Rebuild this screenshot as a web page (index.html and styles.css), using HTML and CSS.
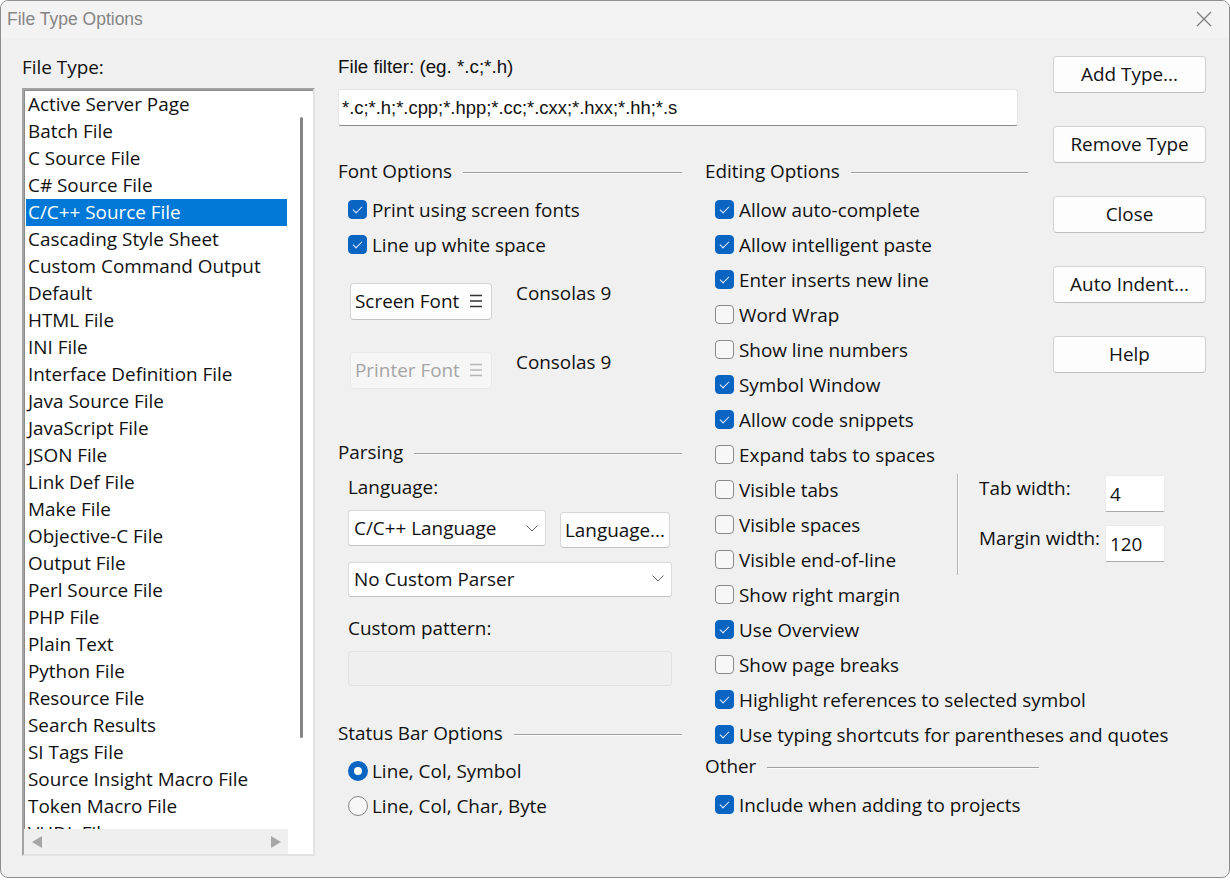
FILE: index.html
```html
<!DOCTYPE html>
<html>
<head>
<meta charset="utf-8">
<title>File Type Options</title>
<link rel="stylesheet" href="styles.css">
</head>
<body>
<div class="window">
  <div class="titlebar">
    <span class="title">File Type Options</span>
    <svg class="close" width="16" height="16" viewBox="0 0 16 16"><path d="M1 1 L15 15 M15 1 L1 15" stroke="#7a7a7a" stroke-width="1.2" fill="none"/></svg>
  </div>
  <div class="content">
    <div class="col-list">
      <div class="lbl">File Type:</div>
      <div class="listbox">
        <div class="items">
          <div class="item">Active Server Page</div>
          <div class="item">Batch File</div>
          <div class="item">C Source File</div>
          <div class="item">C# Source File</div>
          <div class="item selected">C/C++ Source File</div>
          <div class="item">Cascading Style Sheet</div>
          <div class="item">Custom Command Output</div>
          <div class="item">Default</div>
          <div class="item">HTML File</div>
          <div class="item">INI File</div>
          <div class="item">Interface Definition File</div>
          <div class="item">Java Source File</div>
          <div class="item">JavaScript File</div>
          <div class="item">JSON File</div>
          <div class="item">Link Def File</div>
          <div class="item">Make File</div>
          <div class="item">Objective-C File</div>
          <div class="item">Output File</div>
          <div class="item">Perl Source File</div>
          <div class="item">PHP File</div>
          <div class="item">Plain Text</div>
          <div class="item">Python File</div>
          <div class="item">Resource File</div>
          <div class="item">Search Results</div>
          <div class="item">SI Tags File</div>
          <div class="item">Source Insight Macro File</div>
          <div class="item">Token Macro File</div>
          <div class="item">VHDL File</div>
        </div>
        <div class="vscroll"><div class="thumb"></div></div>
        <div class="hscroll">
          <span class="arrow-left"></span>
          <span class="arrow-right"></span>
        </div>
        <div class="corner"></div>
      </div>
    </div>

    <div class="col-main">
      <div class="lbl filter-lbl">File filter: (eg. *.c;*.h)</div>
      <div class="filter-input">*.c;*.h;*.cpp;*.hpp;*.cc;*.cxx;*.hxx;*.hh;*.s</div>

      <div class="groups">
        <div class="col-left">
          <div class="group-head">Font Options</div>
          <div class="checks first">
            <div class="check"><span class="box on"></span>Print using screen fonts</div>
            <div class="check"><span class="box on"></span>Line up white space</div>
          </div>
          <div class="fontrow">
            <div class="fbtn"><span>Screen Font</span>
              <svg width="14" height="14" viewBox="0 0 14 14"><path d="M1 1.5 H13 M1 7 H13 M1 12.5 H13" stroke="#333" stroke-width="1.4"/></svg>
            </div>
            <div class="fontname">Consolas 9</div>
          </div>
          <div class="fontrow second">
            <div class="fbtn disabled"><span>Printer Font</span>
              <svg width="14" height="14" viewBox="0 0 14 14"><path d="M1 1.5 H13 M1 7 H13 M1 12.5 H13" stroke="#b5b5b5" stroke-width="1.4"/></svg>
            </div>
            <div class="fontname">Consolas 9</div>
          </div>

          <div class="group-head parsing">Parsing</div>
          <div class="sublbl lang-lbl">Language:</div>
          <div class="langrow">
            <div class="select sel-lang"><span>C/C++ Language</span>
              <svg width="12" height="7" viewBox="0 0 12 7"><path d="M0.5 0.5 L6 6 L11.5 0.5" stroke="#666" stroke-width="1" fill="none"/></svg>
            </div>
            <div class="pbtn lang-btn">Language...</div>
          </div>
          <div class="select sel-parser"><span>No Custom Parser</span>
            <svg width="12" height="7" viewBox="0 0 12 7"><path d="M0.5 0.5 L6 6 L11.5 0.5" stroke="#666" stroke-width="1" fill="none"/></svg>
          </div>
          <div class="sublbl pattern-lbl">Custom pattern:</div>
          <div class="pattern-input"></div>

          <div class="group-head status">Status Bar Options</div>
          <div class="checks radios">
            <div class="check"><span class="radio on"></span>Line, Col, Symbol</div>
            <div class="check"><span class="radio"></span>Line, Col, Char, Byte</div>
          </div>
        </div>

        <div class="col-right">
          <div class="group-head editing">Editing Options</div>
          <div class="checks first">
            <div class="check"><span class="box on"></span>Allow auto-complete</div>
            <div class="check"><span class="box on"></span>Allow intelligent paste</div>
            <div class="check"><span class="box on"></span>Enter inserts new line</div>
            <div class="check"><span class="box"></span>Word Wrap</div>
            <div class="check"><span class="box"></span>Show line numbers</div>
            <div class="check"><span class="box on"></span>Symbol Window</div>
            <div class="check"><span class="box on"></span>Allow code snippets</div>
            <div class="check"><span class="box"></span>Expand tabs to spaces</div>
            <div class="tabgroup">
              <div class="tabchecks">
                <div class="check"><span class="box"></span>Visible tabs</div>
                <div class="check"><span class="box"></span>Visible spaces</div>
                <div class="check"><span class="box"></span>Visible end-of-line</div>
                <div class="check"><span class="box"></span>Show right margin</div>
              </div>
              <div class="vsep"></div>
              <div class="tabgrid">
                <div class="tlbl">Tab width:</div>
                <div class="num">4</div>
                <div class="tlbl">Margin width:</div>
                <div class="num">120</div>
              </div>
            </div>
            <div class="check"><span class="box on"></span>Use Overview</div>
            <div class="check"><span class="box"></span>Show page breaks</div>
            <div class="check"><span class="box on"></span>Highlight references to selected symbol</div>
            <div class="check"><span class="box on"></span>Use typing shortcuts for parentheses and quotes</div>
          </div>
          <div class="group-head other">Other</div>
          <div class="checks other-checks">
            <div class="check"><span class="box on"></span>Include when adding to projects</div>
          </div>
        </div>
      </div>
    </div>

    <div class="col-buttons">
      <div class="btn">Add Type...</div>
      <div class="btn">Remove Type</div>
      <div class="btn">Close</div>
      <div class="btn">Auto Indent...</div>
      <div class="btn">Help</div>
    </div>
  </div>
</div>
</body>
</html>
```

FILE: styles.css
```css
html, body {
  margin: 0;
  padding: 0;
  background: #ffffff;
}

body {
  width: 1230px;
  height: 880px;
  overflow: hidden;
  font-family: "Open Sans", "Noto Sans", sans-serif;
  font-size: 18.9px;
  color: #111111;
}

.window {
  box-sizing: border-box;
  width: 1230px;
  height: 878px;
  border: 1px solid #8e8e8e;
  border-radius: 8px;
  background: #f0f0f0;
  overflow: hidden;
  display: flex;
  flex-direction: column;
}

.titlebar {
  height: 36px;
  flex: none;
  background: #f3f3f3;
  display: flex;
  align-items: center;
  justify-content: space-between;
  padding-left: 6px;
  padding-bottom: 1px;
}

.title {
  font-family: "Liberation Sans", Arial, sans-serif;
  font-size: 17.5px;
  color: #858585;
}

.close {
  margin-right: 17px;
}

.content {
  flex: 1;
  display: flex;
  padding: 18px 0 0 21px;
  line-height: 22px;
}

/* ---------- list column ---------- */
.col-list {
  width: 293px;
  flex: none;
}

.lbl {
  height: 22px;
  line-height: 22px;
  white-space: nowrap;
}

.listbox {
  box-sizing: border-box;
  margin-top: 10px;
  width: 293px;
  height: 768px;
  border-style: solid;
  border-width: 2px;
  border-color: #a3a3a3 #e2e2e2 #e2e2e2 #a3a3a3;
  box-shadow: inset 1px 1px 0 #8a8a8a;
  background: #ffffff;
  display: grid;
  grid-template-columns: 264px 1fr;
  grid-template-rows: 739px 1fr;
}

.items {
  overflow: hidden;
  padding: 1px 1px 0 2px;
}

.item {
  height: 27px;
  line-height: 27px;
  padding-left: 2px;
  white-space: nowrap;
}

.item.selected {
  background: #0078d7;
  color: #ffffff;
}

.vscroll {
  display: flex;
  justify-content: center;
  padding-top: 27px;
  padding-left: 1px;
}

.thumb {
  width: 3px;
  height: 621px;
  border-radius: 2px;
  background: #858585;
}

.hscroll {
  background: #efefef;
  display: flex;
  align-items: center;
  justify-content: space-between;
  padding: 0 7px 0 8px;
}

.arrow-left {
  width: 0;
  height: 0;
  border-top: 6px solid transparent;
  border-bottom: 6px solid transparent;
  border-right: 10px solid #a6a6a6;
}

.arrow-right {
  width: 0;
  height: 0;
  border-top: 6px solid transparent;
  border-bottom: 6px solid transparent;
  border-left: 10px solid #a6a6a6;
}

.corner {
  background: #ffffff;
}

/* ---------- main column ---------- */
.col-main {
  width: 692px;
  flex: none;
  margin-left: 23px;
}

.filter-lbl {
  font-family: "Liberation Sans", Arial, sans-serif;
  font-size: 18.8px;
}

.filter-input {
  box-sizing: border-box;
  margin-top: 11px;
  width: 680px;
  height: 37px;
  background: #ffffff;
  border: 1px solid #e6e6e6;
  border-bottom: 1px solid #8a8a8a;
  border-radius: 3px;
  padding-left: 3px;
  display: flex;
  align-items: center;
  font-family: "Liberation Sans", Arial, sans-serif;
  font-size: 18.4px;
  white-space: nowrap;
}

.groups {
  display: flex;
  margin-top: 34px;
}

.col-left {
  width: 344px;
  flex: none;
}

.col-right {
  width: 334px;
  flex: none;
  margin-left: 23px;
}

.group-head {
  height: 22px;
  line-height: 22px;
  display: flex;
  align-items: center;
  white-space: nowrap;
}

.group-head::after {
  content: "";
  flex: 1;
  height: 1px;
  margin-left: 11px;
  margin-top: 2px;
  background: #a0a0a0;
  box-shadow: 0 1px 0 #fafafa;
}

.group-head.editing {
  margin-right: 11px;
}

.checks.first {
  margin-top: 10px;
}

.checks.radios {
  margin-top: 9px;
}

.check {
  height: 35px;
  display: flex;
  align-items: center;
  padding-left: 10px;
  white-space: nowrap;
}

.box {
  box-sizing: border-box;
  flex: none;
  width: 19px;
  height: 19px;
  border: 1px solid #8a8a8a;
  border-radius: 4px;
  background: #f7f7f7;
  margin-right: 5px;
  position: relative;
}

.box.on {
  background: #0a64c2;
  border-color: #0a64c2;
}

.box.on::after {
  content: "";
  position: absolute;
  left: 6px;
  top: 3px;
  width: 4px;
  height: 8px;
  border: solid #e8f1fb;
  border-width: 0 1.5px 1.5px 0;
  transform: rotate(45deg);
}

.radio {
  box-sizing: border-box;
  flex: none;
  width: 20px;
  height: 20px;
  border-radius: 50%;
  border: 1px solid #858585;
  background: #f7f7f7;
  margin-right: 4px;
}

.radio.on {
  border: 6px solid #0a64c2;
  background: #ffffff;
}

/* font buttons */
.fontrow {
  display: flex;
  align-items: flex-start;
  padding-left: 12px;
  margin-top: 21px;
}

.fontrow.second {
  margin-top: 32px;
}

.fbtn {
  box-sizing: border-box;
  width: 142px;
  height: 37px;
  border: 1px solid #d3d3d3;
  border-bottom-color: #c2c2c2;
  border-radius: 4px;
  background: #fdfdfd;
  display: flex;
  align-items: center;
  justify-content: space-between;
  padding: 0 8px 2px 4px;
  white-space: nowrap;
}

.fbtn.disabled {
  background: #f6f6f6;
  border-color: #e8e8e8;
  color: #a5a5a5;
}

.fontname {
  margin-left: 24px;
  margin-top: -1px;
  line-height: 22px;
  white-space: nowrap;
}

.group-head.parsing {
  margin-top: 52px;
}

.sublbl {
  height: 22px;
  line-height: 22px;
  padding-left: 10px;
}

.lang-lbl {
  margin-top: 13px;
}

.langrow {
  display: flex;
  align-items: flex-start;
  margin-top: 12px;
  padding-left: 10px;
  height: 36px;
}

.select {
  box-sizing: border-box;
  height: 36px;
  background: #ffffff;
  border: 1px solid #dadada;
  border-bottom-color: #c4c4c4;
  border-radius: 3px;
  display: flex;
  align-items: center;
  justify-content: space-between;
  padding: 0 7px 0 5px;
  white-space: nowrap;
}

.sel-lang {
  width: 198px;
}

.sel-parser {
  width: 324px;
  height: 35px;
  margin-left: 10px;
  margin-top: 16px;
  padding-bottom: 2px;
}

.pbtn {
  box-sizing: border-box;
  height: 36px;
  border: 1px solid #d6d6d6;
  border-bottom-color: #c2c2c2;
  border-radius: 4px;
  background: #fdfdfd;
  display: flex;
  align-items: center;
  justify-content: center;
  white-space: nowrap;
}

.lang-btn {
  width: 110px;
  margin-left: 14px;
  margin-top: 2px;
}

.pattern-lbl {
  margin-top: 20px;
}

.pattern-input {
  box-sizing: border-box;
  margin-top: 12px;
  margin-left: 10px;
  width: 324px;
  height: 35px;
  background: #efefef;
  border: 1px solid #e2e2e2;
  border-radius: 3px;
}

.group-head.status {
  margin-top: 36px;
}

/* editing options */
.tabgroup {
  display: flex;
  align-items: flex-start;
}

.tabchecks {
  width: 252px;
  flex: none;
}

.vsep {
  width: 1px;
  height: 101px;
  margin-top: 2px;
  background: #b5b5b5;
  box-shadow: 1px 0 0 #fafafa;
  flex: none;
}

.tabgrid {
  margin-left: 21px;
  margin-top: 3px;
  display: grid;
  grid-template-columns: 126px 60px;
  row-gap: 13px;
  align-items: start;
}

.tlbl {
  padding-top: 2px;
  line-height: 22px;
  white-space: nowrap;
}

.num {
  box-sizing: border-box;
  height: 37px;
  background: #ffffff;
  border: 1px solid #ebebeb;
  border-bottom: 1px solid #a8a8a8;
  border-radius: 2px;
  padding-left: 4px;
  display: flex;
  align-items: center;
}

.group-head.other {
  margin-top: 3px;
}

.other-checks {
  margin-top: 10px;
}

/* right buttons */
.col-buttons {
  width: 153px;
  flex: none;
  margin-left: 23px;
  display: flex;
  flex-direction: column;
  gap: 33px;
}

.btn {
  box-sizing: border-box;
  height: 37px;
  border: 1px solid #d3d3d3;
  border-bottom-color: #bdbdbd;
  border-radius: 4px;
  background: #fdfdfd;
  display: flex;
  align-items: center;
  justify-content: center;
  padding-bottom: 2px;
  white-space: nowrap;
}
```
